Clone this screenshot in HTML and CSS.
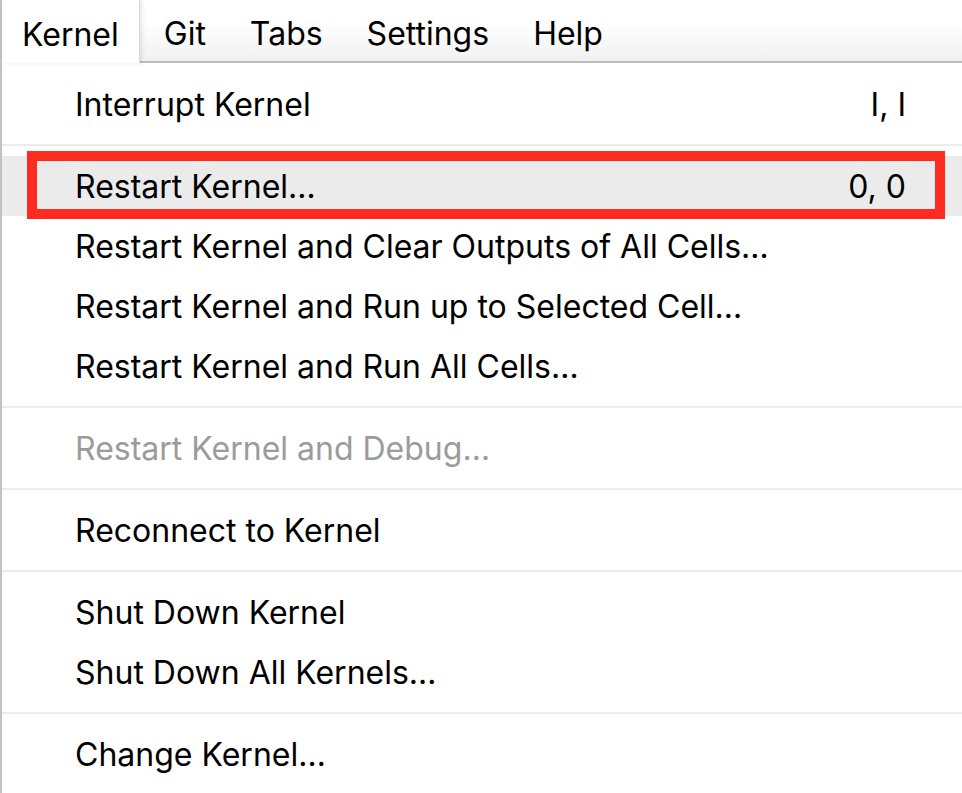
FILE: index.html
```html
<!DOCTYPE html>
<html lang="en">
<head>
    <meta charset="UTF-8">
    <title>Kernel menu</title>
    <link rel="stylesheet" href="styles.css">
</head>
<body>
    <div class="app">
        <div class="menubar">
            <div class="barItem active">Kernel</div>
            <div class="barItem">Git</div>
            <div class="barItem">Tabs</div>
            <div class="barItem">Settings</div>
            <div class="barItem">Help</div>
        </div>
        <ul class="menu">
            <li class="item"><span class="label">Interrupt Kernel</span><span class="key">I, I</span></li>
            <li class="sep"></li>
            <li class="item hover"><span class="label">Restart Kernel…</span><span class="key">0, 0</span><span class="mark"></span></li>
            <li class="item"><span class="label">Restart Kernel and Clear Outputs of All Cells…</span></li>
            <li class="item"><span class="label">Restart Kernel and Run up to Selected Cell…</span></li>
            <li class="item"><span class="label">Restart Kernel and Run All Cells…</span></li>
            <li class="sep"></li>
            <li class="item disabled"><span class="label">Restart Kernel and Debug…</span></li>
            <li class="sep"></li>
            <li class="item"><span class="label">Reconnect to Kernel</span></li>
            <li class="sep"></li>
            <li class="item"><span class="label">Shut Down Kernel</span></li>
            <li class="item"><span class="label">Shut Down All Kernels…</span></li>
            <li class="sep"></li>
            <li class="item"><span class="label">Change Kernel…</span></li>
        </ul>
    </div>
</body>
</html>
```

FILE: styles.css
```css
*{
    padding: 0;
    margin: 0;
    list-style: none;
    box-sizing: border-box;
}
body{
    background: #fff;
    font-family: Inter, "Liberation Sans", sans-serif;
    color: #000;
    overflow: hidden;
}
.app{
    height: 100vh;
    border-left: 2px solid #c2c2c2;
}
/* top bar */
.menubar{
    display: flex;
    height: 63px;
    border-bottom: 2px solid #bcbcbc;
    background: linear-gradient(#fff 35%, #f1f1f1);
    font-size: 32px;
}
.menubar .barItem{
    display: flex;
    align-items: center;
    padding: 6px 22px 0;
}
.menubar .active{
    padding: 6px 20px 0;
    margin-right: 2px;
    height: 63px;
    background: #fff;
    border-right: 1px solid #d8d8d8;
    box-shadow: 2px 0 4px rgba(0, 0, 0, 0.1);
    position: relative;
    z-index: 1;
}
/* dropdown */
.menu{
    padding-top: 11px;
    font-size: 32px;
}
.menu .item{
    position: relative;
    display: flex;
    align-items: center;
    height: 60px;
    padding: 0 56px 0 73px;
}
.menu .item .label{
    flex: 1;
}
.menu .hover{
    background: #ebebeb;
}
.menu .disabled{
    color: #9b9b9b;
}
.menu .sep{
    height: 22px;
    padding-top: 10px;
}
.menu .sep::before{
    content: "";
    display: block;
    height: 2px;
    background: #ececec;
}
.menu .mark{
    position: absolute;
    left: 25px;
    right: 17px;
    top: -5px;
    bottom: -3px;
    border: 10px solid #fe2c20;
}
```
